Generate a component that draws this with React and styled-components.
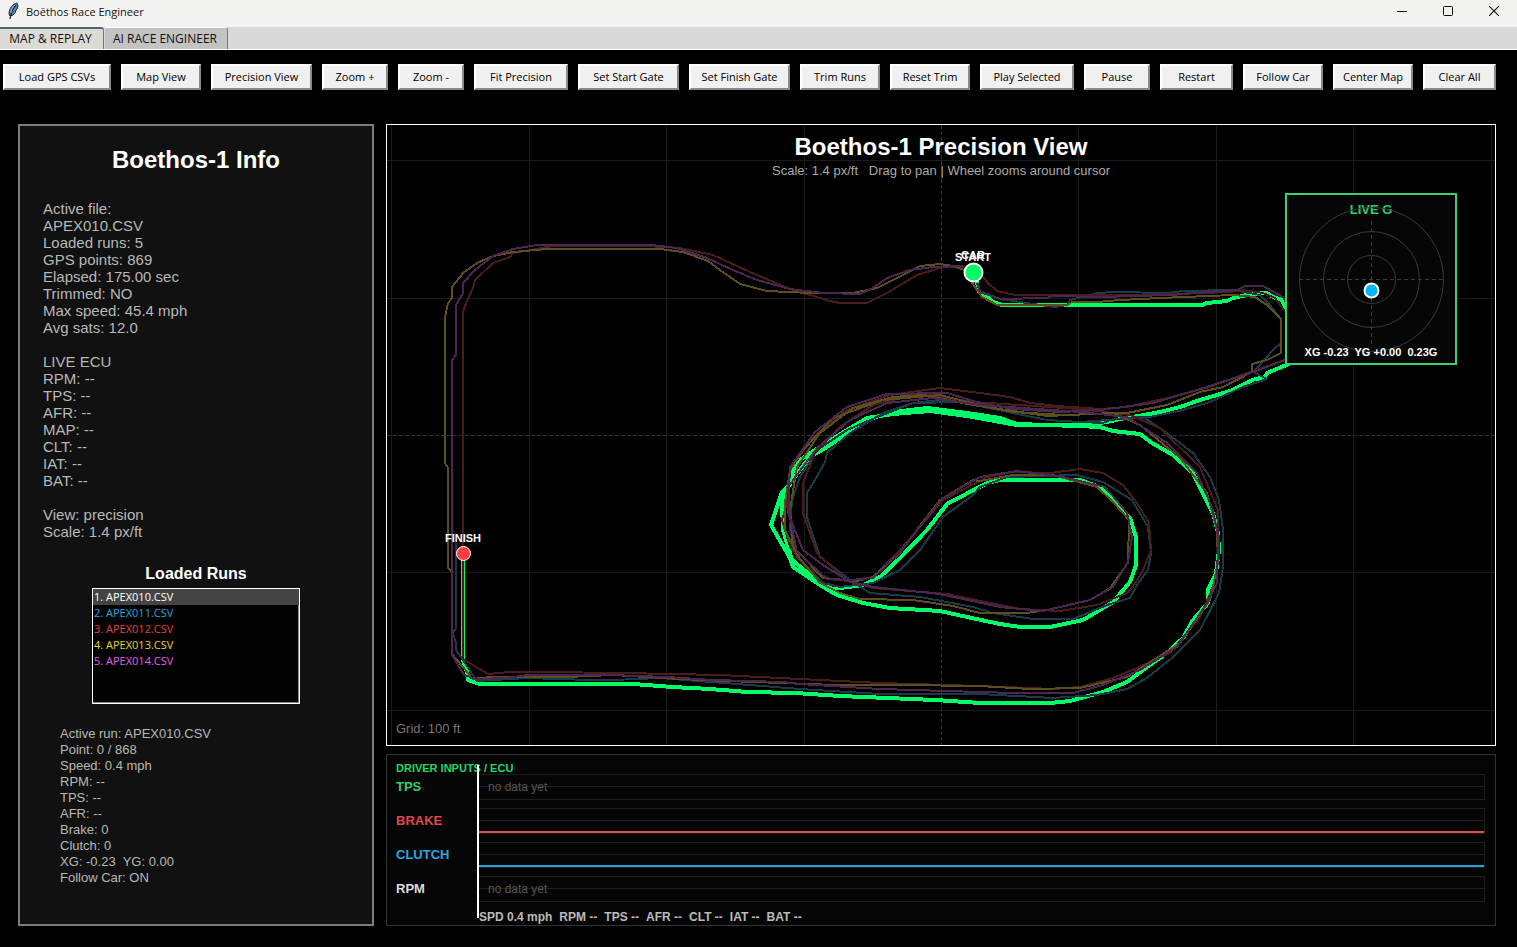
import React, { useState } from 'react'
import styled, { createGlobalStyle } from 'styled-components'

const UI_FONT = '"Open Sans", "Noto Sans", sans-serif'
const ARIAL = '"Liberation Sans", Arial, sans-serif'

const GlobalStyle = createGlobalStyle`
  *, *::before, *::after { box-sizing: border-box; }
  body { margin: 0; background: #000; }
`

const Window = styled.div`
  display: flex;
  flex-direction: column;
  min-height: 100vh;
  background: #000;
  color: #fff;
  font-family: ${ARIAL};
`

const TitleBar = styled.header`
  display: flex;
  align-items: flex-start;
  height: 27px;
  padding-left: 6px;
  background: #f3f3f1;
  color: #111;
  font-family: ${UI_FONT};
`

const WindowTitle = styled.h1`
  flex: 1;
  margin: 0 0 0 6px;
  font-size: 11px;
  font-weight: 400;
  line-height: 24px;
`

const WindowButton = styled.button`
  display: flex;
  align-items: center;
  justify-content: center;
  width: 46px;
  height: 22px;
  padding: 0;
  border: 0;
  background: transparent;
`

const Tabs = styled.nav`
  display: flex;
  gap: 1px;
  height: 23px;
  background: #d9d9d9;
  border-bottom: 1px solid #fff;
`

const Tab = styled.button`
  width: ${p => p.$wide ? 123 : 104}px;
  height: 22px;
  padding: 0 2px 0 0;
  border: 0;
  border-top: ${p => p.$active ? '2px solid #4f6478' : '1px solid #fff'};
  border-right: 1px solid #777;
  border-radius: 0 3px 0 0;
  background: ${p => p.$active ? '#dcdad5' : '#c3c3c3'};
  color: #111;
  font-family: ${UI_FONT};
  font-size: 12px;
  line-height: 20px;
  white-space: nowrap;
`

const Toolbar = styled.div`
  display: flex;
  gap: 10px;
  padding: 14px 3px 34px;
`

const ToolButton = styled.button`
  flex: none;
  width: ${p => p.$chars * 7 + 10}px;
  height: 26px;
  padding: 0;
  border: 2px solid;
  border-color: #fff #8a8a8a #8a8a8a #fff;
  background: #f0f0f0;
  color: #000;
  font-family: ${UI_FONT};
  font-size: 11px;
  line-height: 20px;
  white-space: nowrap;
`

const Workspace = styled.main`
  flex: 1;
  display: flex;
  gap: 12px;
  padding: 0 21px 21px 18px;
`

const InfoPanel = styled.aside`
  flex: none;
  display: flex;
  flex-direction: column;
  width: 356px;
  padding: 20px 23px;
  border: 2px solid #7c7c7c;
  background: #111;
`

const InfoTitle = styled.h2`
  margin: 0 0 26px;
  font-size: 24px;
  line-height: 28px;
  text-align: center;
`

const InfoText = styled.div`
  color: #b8b8b8;
  font-size: ${p => p.$small ? 13 : 15}px;
  line-height: ${p => p.$small ? 16 : 17}px;
  padding-left: ${p => p.$small ? 17 : 0}px;
  white-space: pre;
`

const RunsLabel = styled.label`
  margin: 24px 0 4px;
  font-size: 16px;
  font-weight: 700;
  line-height: 20px;
  text-align: center;
`

const RunList = styled.select`
  align-self: center;
  width: 208px;
  height: 116px;
  margin-bottom: 22px;
  padding: 0;
  overflow: hidden;
  border: 1px solid #fff;
  border-radius: 0;
  outline: 0;
  background: #030303;
  box-shadow: inset -1px -1px #888;
  font-family: ${UI_FONT};
  font-size: 11px;
`

const RunOption = styled.option`
  height: 16px;
  min-height: 16px;
  padding: 0 1px;
  color: ${p => p.$color};
  line-height: 16px;

  &:checked {
    background: #444 linear-gradient(#444, #444);
    color: #fff;
  }
`

const Views = styled.div`
  flex: 1;
  min-width: 0;
  display: flex;
  flex-direction: column;
  gap: 8px;
`

const MapPanel = styled.section`
  position: relative;
  flex: 1;
  display: flex;
  min-height: 400px;
  border: 1px solid #fff;
  background: #000;
`

const MapSvg = styled.svg`
  flex: 1;
  width: 100%;
  min-width: 0;
`

const MapHeading = styled.div`
  position: absolute;
  top: 8px;
  left: 0;
  width: 100%;
  text-align: center;
`

const MapTitle = styled.h2`
  margin: 0;
  font-size: 24px;
  line-height: 28px;
`

const MapHint = styled.p`
  margin: 0;
  color: #aaa;
  font-size: 13px;
  line-height: 20px;
  white-space: pre;
`

const GridNote = styled.span`
  position: absolute;
  left: 9px;
  bottom: 8px;
  color: #777;
  font-size: 13px;
  line-height: 16px;
`

const GMeter = styled.div`
  position: absolute;
  top: 68px;
  right: 38px;
  width: 172px;
  height: 172px;
  border: 2px solid #38d070;
  background: #060606;
`

const MarkerText = styled.text`
  fill: ${p => p.$color || '#fff'};
  font-family: ${ARIAL};
  font-size: ${p => p.$size || 11}px;
  font-weight: 700;
  text-anchor: middle;
  white-space: pre;
`

const InputsPanel = styled.section`
  position: relative;
  display: flex;
  flex-direction: column;
  height: 172px;
  padding: 3px 10px 0 9px;
  border: 1px solid #333;
  background: #050505;
`

const InputsTitle = styled.h3`
  height: 16px;
  margin: 0;
  color: #22d868;
  font-size: 11px;
  line-height: 20px;
`

const Channels = styled.div`
  display: grid;
  gap: 8px;
`

const Channel = styled.div`
  display: grid;
  grid-template-columns: 82px 1fr;
  height: 26px;
`

const ChannelName = styled.span`
  color: ${p => p.$color};
  font-size: 13px;
  font-weight: 700;
  line-height: 25px;
`

const Plot = styled.div`
  display: flex;
  align-items: ${p => p.$empty ? 'center' : 'flex-end'};
  padding-left: ${p => p.$empty ? 9 : 0}px;
  border: 1px solid #1e1e1e;
  background: linear-gradient(#1e1e1e, #1e1e1e) 0 11px / 100% 1px no-repeat;
  color: #555;
  font-size: 12px;
`

const Trace = styled.div`
  flex: 1;
  height: 2px;
  background: ${p => p.$color};
`

const Playhead = styled.div`
  position: absolute;
  top: 10px;
  left: 90px;
  width: 2px;
  height: 153px;
  background: #fff;
`

const Readout = styled.div`
  display: flex;
  gap: 7px;
  margin-top: 7px;
  padding-left: 83px;
  color: #bbb;
  font-size: 12px;
  font-weight: 700;
  line-height: 16px;
  white-space: nowrap;
`

// [label, width in characters]
const TOOLS = [
  ['Load GPS CSVs', 14],
  ['Map View', 10],
  ['Precision View', 13],
  ['Zoom +', 8],
  ['Zoom -', 8],
  ['Fit Precision', 12],
  ['Set Start Gate', 13],
  ['Set Finish Gate', 13],
  ['Trim Runs', 10],
  ['Reset Trim', 10],
  ['Play Selected', 12],
  ['Pause', 8],
  ['Restart', 9],
  ['Follow Car', 10],
  ['Center Map', 10],
  ['Clear All', 9],
]

const INFO = `Active file:
APEX010.CSV
Loaded runs: 5
GPS points: 869
Elapsed: 175.00 sec
Trimmed: NO
Max speed: 45.4 mph
Avg sats: 12.0

LIVE ECU
RPM: --
TPS: --
AFR: --
MAP: --
CLT: --
IAT: --
BAT: --

View: precision
Scale: 1.4 px/ft`

const POINT_INFO = `Active run: APEX010.CSV
Point: 0 / 868
Speed: 0.4 mph
RPM: --
TPS: --
AFR: --
Brake: 0
Clutch: 0
XG: -0.23  YG: 0.00
Follow Car: ON`

const RUNS = [
  { name: '1. APEX010.CSV', color: '#fff' },
  { name: '2. APEX011.CSV', color: '#22a8dc' },
  { name: '3. APEX012.CSV', color: '#e04444' },
  { name: '4. APEX013.CSV', color: '#e8d030' },
  { name: '5. APEX014.CSV', color: '#e060e0' },
]

const CHANNELS = [
  { name: 'TPS', color: '#2bd06a' },
  { name: 'BRAKE', color: '#e04848', trace: '#d8504e' },
  { name: 'CLUTCH', color: '#25a8e0', trace: '#25a4d8' },
  { name: 'RPM', color: '#ddd' },
]

const READINGS = ['SPD 0.4 mph', 'RPM --', 'TPS --', 'AFR --', 'CLT --', 'IAT --', 'BAT --']

// active run, drawn thick under the others
const ACTIVE_TRACK =
  '973,272 977,283 979,292 987,297 993,302 1002,305 1202,305 1207,303 1227,301 1233,298 1247,295 1260,293 1267,293 1273,297 1282,300 1285,308 1300,330 1300,358 1289,364 1267,373 1265,377 1252,380 1233,390 1217,395 1200,400 1180,407 1160,412 1138,416 1120,419 1107,422 1080,425 1017,425 1000,422 967,416 930,411 893,414 867,418 847,430 823,445 800,460 792,473 790,485 782,492 771,525 790,558 793,567 820,585 837,595 863,603 890,608 940,611 967,617 1000,624 1020,627 1050,627 1083,620 1113,602 1130,582 1136,565 1136,537 1130,518 1117,505 1100,487 1080,480 1000,480 987,483 947,504 927,530 900,558 880,577 863,585 833,589 820,583 792,560 783,530 782,503 790,483 810,457 827,447 840,438 857,427 873,418 893,412 927,408 967,413 1000,418 1017,424 1077,426 1100,427 1113,431 1140,434 1152,443 1173,455 1193,473 1200,488 1213,513 1218,533 1219,550 1216,573 1208,590 1208,603 1193,620 1183,638 1167,653 1147,667 1127,682 1103,692 1070,701 1050,703 980,703 935,700 840,696 795,693 747,692 710,689 673,687 633,684 480,684 468,680 467,672 463,660 463,557'

const GHOST_TRACKS = [
  {
    color: '#1a3a4a',
    points:
      '977,283 980,292 1000,299 1040,305 1055,307 1067,305 1070,300 1097,293 1115,292 1167,293 1183,291 1233,290 1260,295 1270,305 1278,315 1281,319 1281,343 1273,350 1260,365 1253,372 1267,379 1243,387 1210,402 1183,410 1150,417 1080,422 1047,420 1013,413 980,405 940,400 913,403 883,413 850,433 827,453 825,462 815,480 807,493 807,517 820,557 853,582 870,593 920,597 973,607 993,613 1033,619 1073,619 1107,605 1130,598 1137,585 1148,570 1151,553 1148,527 1132,500 1103,482 1077,475 1007,477 980,487 973,495 943,517 920,550 900,570 873,583 840,587 823,583 797,557 790,530 792,500 800,477 817,450 847,430 870,420 913,403 960,402 1013,413 1047,420 1080,422 1103,423 1113,419 1143,417 1167,433 1193,453 1210,477 1219,500 1223,530 1223,567 1219,593 1200,630 1173,657 1147,678 1127,689 1097,695 1053,698 980,694 880,694 800,689 737,684 660,678 613,680 590,680 527,678 477,681 456,650 456,643 453,633 456,628 456,543',
  },
  {
    color: '#4a1c1c',
    points:
      '983,277 988,283 997,291 1015,295 1140,295 1230,292 1243,290 1263,293 1275,298 1284,310 1300,330 1285,360 1247,373 1210,387 1167,398 1127,407 1100,409 1057,406 1030,403 1010,397 980,393 940,388 890,395 847,410 813,437 790,470 787,503 782,520 790,547 807,567 827,579 850,581 873,588 947,594 1000,605 1020,609 1060,611 1097,605 1127,593 1133,587 1143,570 1151,550 1149,523 1137,503 1123,485 1103,473 1080,469 1050,473 1013,472 987,477 943,500 920,527 900,550 873,577 847,581 817,553 803,513 803,483 815,453 840,427 873,405 920,393 973,402 1080,409 1130,415 1160,428 1200,467 1218,510 1219,557 1213,587 1200,617 1170,653 1137,668 1113,678 1080,687 1053,689 980,686 880,683 800,679 720,675 623,673 543,672 510,672 488,674 463,659 463,312 466,303 473,288 475,280 493,263 510,257 513,253 553,246 647,246 680,248 713,255 750,272 790,289 830,301 840,303 867,303 887,293 917,275 943,267 967,267',
  },
  {
    color: '#5c4f1c',
    points:
      '970,280 982,297 997,305 1067,305 1072,302 1097,302 1120,300 1160,298 1233,295 1255,297 1267,305 1281,319 1281,353 1267,360 1252,364 1252,372 1223,387 1200,392 1167,405 1127,413 1063,415 1013,412 980,405 940,395 883,400 833,418 803,450 790,470 785,503 785,530 797,555 820,583 840,593 860,599 913,600 953,606 980,613 1027,613 1047,610 1090,600 1110,588 1128,563 1129,520 1113,502 1097,487 1053,475 1013,475 980,481 973,480 940,500 922,523 900,553 873,577 857,581 823,578 793,547 790,510 797,467 820,433 853,408 893,397 923,395 973,405 1047,416 1113,413 1140,425 1180,458 1207,493 1217,530 1218,563 1210,600 1180,643 1127,677 1080,688 1030,689 980,686 900,685 835,685 700,680 663,678 613,675 567,677 490,677 473,679 452,654 452,572 448,568 448,468 445,463 445,317 448,303 452,298 452,287 463,273 477,263 493,256 513,252 547,249 660,249 683,252 708,261 720,270 740,284 767,291 810,293 853,293 877,288 907,273 920,266 940,264 953,266 970,272',
  },
  {
    color: '#4a2650',
    points:
      '978,283 980,291 1000,299 1047,298 1052,296 1100,297 1170,295 1237,290 1245,286 1263,286 1283,297 1300,330 1285,360 1250,373 1200,389 1153,403 1100,410 1060,412 1013,409 980,403 947,393 887,394 847,407 815,432 790,467 788,513 803,550 823,565 850,582 873,587 940,594 1000,607 1043,611 1090,600 1113,587 1128,562 1132,537 1127,513 1105,487 1063,477 1017,471 980,477 943,498 923,522 900,553 873,578 850,580 827,579 797,552 790,517 788,487 817,448 850,420 887,403 933,398 980,405 1080,412 1127,417 1167,443 1197,473 1213,510 1218,537 1217,583 1207,603 1177,647 1140,670 1103,685 1073,693 1013,693 980,692 880,689 800,684 783,682 713,680 667,677 610,675 527,675 507,678 477,679 464,675 452,655 452,360 456,355 456,305 463,293 463,283 475,270 493,256 513,249 537,245 652,245 677,248 707,258 733,270 757,280 790,289 823,293 860,294 873,288 887,278 910,270 933,267 963,266',
  },
]

const GRID_X = [391, 529, 666, 804, 941, 1078, 1216, 1353, 1491]
const GRID_Y = [160, 298, 435, 572, 710]

const Feather = () => (
  <svg width="14" height="20" viewBox="0 -2 14 20" aria-hidden="true">
    <path d="M11 1C7 2 3 6 3 12l1 2 3-1 2-2 1-3 1-1 1-3z" fill="#5b86b8" stroke="#1c2838" strokeWidth="1" />
    <path d="M10 3C7 6 5 10 4 17" fill="none" stroke="#10151d" strokeWidth="1.2" />
    <path d="M9 3C7 5 5 8 5 11" fill="none" stroke="#c2d8ee" strokeWidth="0.8" />
  </svg>
)

const TrackMap = () => (
  <MapSvg viewBox="387 125 1108 620" role="img" aria-label="Track map">
    <g stroke="#1b1b1b" shapeRendering="crispEdges">
      {GRID_X.map(x => (
        <line key={x} x1={x + 0.5} x2={x + 0.5} y1="125" y2="745"
          stroke={x === 941 ? '#333' : undefined} strokeDasharray={x === 941 ? '4 2' : undefined} />
      ))}
      {GRID_Y.map(y => (
        <line key={y} x1="387" x2="1495" y1={y + 0.5} y2={y + 0.5}
          stroke={y === 435 ? '#333' : undefined} strokeDasharray={y === 435 ? '4 2' : undefined} />
      ))}
    </g>
    <g fill="none" strokeLinejoin="round" shapeRendering="crispEdges">
      <polyline points={ACTIVE_TRACK} stroke="#00ff66" strokeWidth="4" />
      {GHOST_TRACKS.map(t => (
        <polyline key={t.color} points={t.points} stroke={t.color} strokeWidth="2" />
      ))}
    </g>
    <circle cx="463.5" cy="553.5" r="7" fill="#ff4040" stroke="#fff" />
    <MarkerText x="463" y="542">FINISH</MarkerText>
    <MarkerText x="973" y="259">CAR</MarkerText>
    <MarkerText x="973" y="261">START</MarkerText>
    <circle cx="973.5" cy="272.5" r="9" fill="#00ff66" stroke="#fff" strokeWidth="2" />
  </MapSvg>
)

const LiveG = () => (
  <GMeter>
    <svg width="168" height="168" viewBox="0 0 168 168" role="img" aria-label="Live G meter">
      <MarkerText x="84" y="19" $size={13} $color="#2bd06a">LIVE G</MarkerText>
      <g fill="none" stroke="#3a3a3a">
        <circle cx="84.5" cy="84.5" r="24" />
        <circle cx="84.5" cy="84.5" r="48" />
        <circle cx="84.5" cy="84.5" r="72" />
        <path d="M12 84.500H156M84.500 26V152" strokeDasharray="4 3" />
      </g>
      <circle cx="84.5" cy="95.5" r="7" fill="#00b7ff" stroke="#fff" strokeWidth="2" />
      <MarkerText x="84" y="161">{'XG -0.23  YG +0.00  0.23G'}</MarkerText>
    </svg>
  </GMeter>
)

const App = () => {
  const [tab, setTab] = useState('map')
  const [run, setRun] = useState('1. APEX010.CSV')

  return (
    <>
      <GlobalStyle />
      <Window>
        <TitleBar>
          <Feather />
          <WindowTitle>Boēthos Race Engineer</WindowTitle>
          <WindowButton aria-label="Minimize">
            <svg width="10" height="10"><path d="M0 5.500H10" stroke="#111" /></svg>
          </WindowButton>
          <WindowButton aria-label="Maximize">
            <svg width="10" height="10"><rect x="0.500" y="0.500" width="9" height="9" rx="1" fill="none" stroke="#111" /></svg>
          </WindowButton>
          <WindowButton aria-label="Close">
            <svg width="10" height="10"><path d="M0 0L10 10M10 0L0 10" stroke="#111" strokeWidth="1.100" /></svg>
          </WindowButton>
        </TitleBar>

        <Tabs role="tablist">
          <Tab role="tab" $active={tab === 'map'} onClick={() => setTab('map')}>MAP &amp; REPLAY</Tab>
          <Tab role="tab" $wide $active={tab === 'ai'} onClick={() => setTab('ai')}>AI RACE ENGINEER</Tab>
        </Tabs>

        <Toolbar>
          {TOOLS.map(([label, chars]) => (
            <ToolButton key={label} $chars={chars}>{label}</ToolButton>
          ))}
        </Toolbar>

        <Workspace>
          <InfoPanel>
            <InfoTitle>Boethos-1 Info</InfoTitle>
            <InfoText>{INFO}</InfoText>
            <RunsLabel htmlFor="runs">Loaded Runs</RunsLabel>
            <RunList id="runs" size={7} value={run} onChange={e => setRun(e.target.value)}>
              {RUNS.map(r => (
                <RunOption key={r.name} value={r.name} $color={r.color}>{r.name}</RunOption>
              ))}
            </RunList>
            <InfoText $small>{POINT_INFO}</InfoText>
          </InfoPanel>

          <Views>
            <MapPanel>
              <TrackMap />
              <MapHeading>
                <MapTitle>Boethos-1 Precision View</MapTitle>
                <MapHint>{'Scale: 1.4 px/ft   Drag to pan | Wheel zooms around cursor'}</MapHint>
              </MapHeading>
              <LiveG />
              <GridNote>Grid: 100 ft</GridNote>
            </MapPanel>

            <InputsPanel>
              <InputsTitle>DRIVER INPUTS / ECU</InputsTitle>
              <Channels>
                {CHANNELS.map(c => (
                  <Channel key={c.name}>
                    <ChannelName $color={c.color}>{c.name}</ChannelName>
                    <Plot $empty={!c.trace}>
                      {c.trace ? <Trace $color={c.trace} /> : 'no data yet'}
                    </Plot>
                  </Channel>
                ))}
              </Channels>
              <Readout>
                {READINGS.map(r => <span key={r}>{r}</span>)}
              </Readout>
              <Playhead />
            </InputsPanel>
          </Views>
        </Workspace>
      </Window>
    </>
  )
}

export default App
